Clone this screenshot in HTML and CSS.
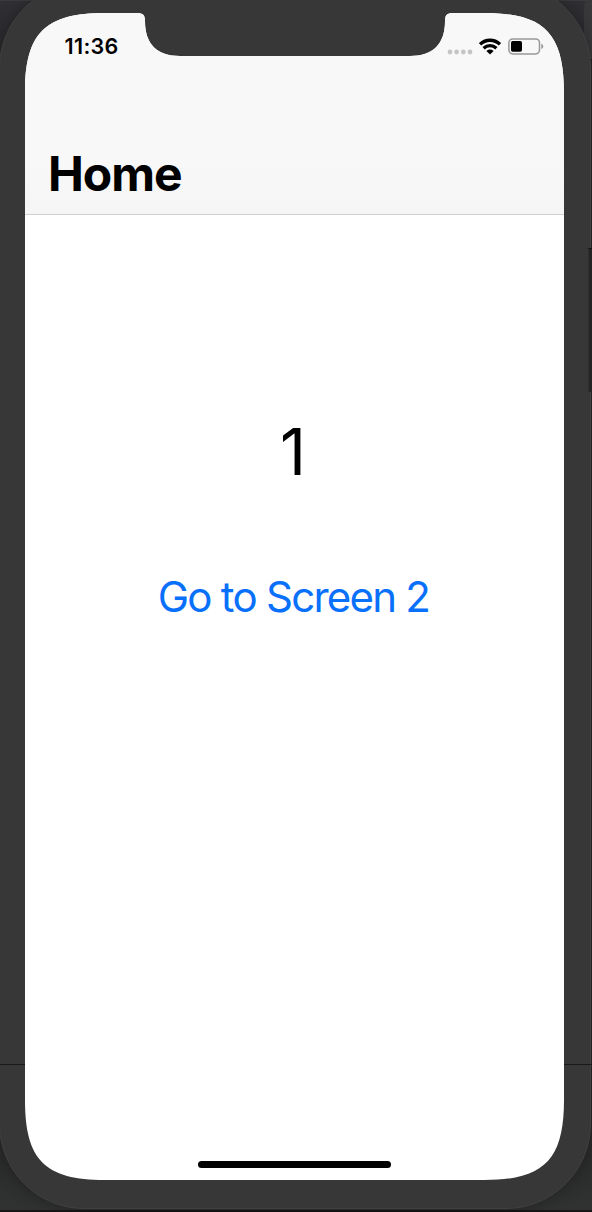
FILE: index.html
```html
<!DOCTYPE html>
<html lang="en">
<head>
<meta charset="utf-8">
<title>Home</title>
<link rel="stylesheet" href="styles.css">
</head>
<body>
<div class="desktop">
  <div class="window-edge"></div>
  <div class="side-panel"></div>
  <div class="bezel"></div>
  <div class="seam"></div>
  <div class="right-edge"></div>
  <main class="screen">
    <header class="nav">
      <div class="status">
        <span class="time">11:36</span>
        <div class="indicators">
          <svg class="dots" width="26" height="6" viewBox="0 0 26 6" fill="#c5c5c5"><circle cx="3" cy="3" r="2.4"/><circle cx="9.6" cy="3" r="2.4"/><circle cx="16.3" cy="3" r="2.4"/><circle cx="23" cy="3" r="2.4"/></svg>
          <svg class="wifi" width="22" height="17" viewBox="0 0 22 17"><g fill="none" stroke="#000" stroke-width="3.3"><path d="M1.1 6.3C6.8.9 15.2.9 20.9 6.3"/><path d="M4.6 10.2C8.3 6.8 13.7 6.8 17.4 10.2"/></g><path d="M7.4 12.9Q11 10.2 14.6 12.9L11 16.6Z"/></svg>
          <svg class="battery" width="36" height="17" viewBox="0 0 36 17"><rect x=".9" y=".9" width="30.6" height="15" rx="3.8" fill="none" stroke="#989898" stroke-width="1.5"/><rect x="3" y="3" width="11" height="10.8" rx="1.7"/><path d="M33.3 5.8Q35.3 6.6 35.3 8.4T33.3 11Z" fill="#989898"/></svg>
        </div>
      </div>
      <h1 class="title">Home</h1>
    </header>
    <section class="content">
      <div class="count">1</div>
      <a class="link">Go to Screen 2</a>
    </section>
    <div class="home-indicator"></div>
  </main>
</div>
</body>
</html>
```
FILE: styles.css
```css
body {
  margin: 0;
}

.desktop {
  position: relative;
  box-sizing: border-box;
  width: 592px;
  height: 1212px;
  padding: 13px 28px 32px 25px;
  overflow: hidden;
  background: linear-gradient(#303034 0, #29292c 60px, #29292a 1130px, #303131 1210px, #171717 1210px);
  font-family: Inter, "Liberation Sans", sans-serif;
  color: #000;
}

.window-edge {
  position: absolute;
  top: 0;
  left: 0;
  width: 100%;
  height: 1px;
  background: #3b3b3e;
}

.side-panel {
  position: absolute;
  top: 0;
  right: 0;
  width: 8px;
  height: 59px;
  border-radius: 6px 0 0;
  background: #38383b;
  border-bottom: 1px solid #171717;
}

.bezel {
  position: absolute;
  inset: -17px 1px 3px -1px;
  box-sizing: border-box;
  border: 1px solid #404040;
  border-radius: 85px;
  background: #373737;
  box-shadow: 0 0 16px rgba(0, 0, 0, .3);
}

.seam {
  position: absolute;
  top: 1064px;
  left: 0;
  width: 100%;
  height: 1px;
  background: #191919;
}

.right-edge {
  position: absolute;
  top: 248px;
  right: 0;
  width: 4px;
  height: 144px;
  background: #242424;
  box-sizing: border-box;
  border-top: 1px solid #111;
  border-left: 1px solid #303030;
}

.screen {
  position: relative;
  display: flex;
  flex-direction: column;
  width: 539px;
  height: 1167px;
  background: #fff;
  clip-path: path("M0 80C0 20 20 0 80 0H112C118 0 120 2 120 8C120 31 132 43 155 43H385C408 43 420 31 420 8C420 2 422 0 428 0H459C519 0 539 20 539 80V1087C539 1147 519 1167 459 1167H80C20 1167 0 1147 0 1087Z");
}

.nav {
  box-sizing: border-box;
  height: 202px;
  background: linear-gradient(#f8f8f8 75%, #f5f5f5);
  border-bottom: 1px solid #cfcfcf;
}

.status {
  display: flex;
  justify-content: space-between;
  align-items: flex-start;
  height: 26px;
  padding: 20px 20px 0 39.5px;
}

.time {
  font-size: 21.5px;
  line-height: 26px;
  font-weight: 600;
  letter-spacing: .35px;
}

.indicators {
  display: flex;
  align-items: flex-start;
  padding-top: 4.5px;
}

.dots {
  margin: 11px 6px 0 0;
}

.wifi {
  margin-right: 7px;
}

.title {
  margin: 86px 0 0 23px;
  font-size: 48px;
  line-height: 58px;
  font-weight: 700;
  letter-spacing: -1px;
}

.content {
  flex: 1;
  display: flex;
  flex-direction: column;
  align-items: center;
}

.count {
  margin: 197px 3px 0 0;
  font-size: 64px;
  line-height: 80px;
}

.link {
  margin: 80px 2px 0 0;
  font-size: 42px;
  line-height: 50px;
  letter-spacing: -1.75px;
  color: #0870fb;
  white-space: nowrap;
}

.home-indicator {
  width: 193px;
  height: 7px;
  margin: 0 0 12px 173px;
  border-radius: 4px;
  background: #000;
}
```
